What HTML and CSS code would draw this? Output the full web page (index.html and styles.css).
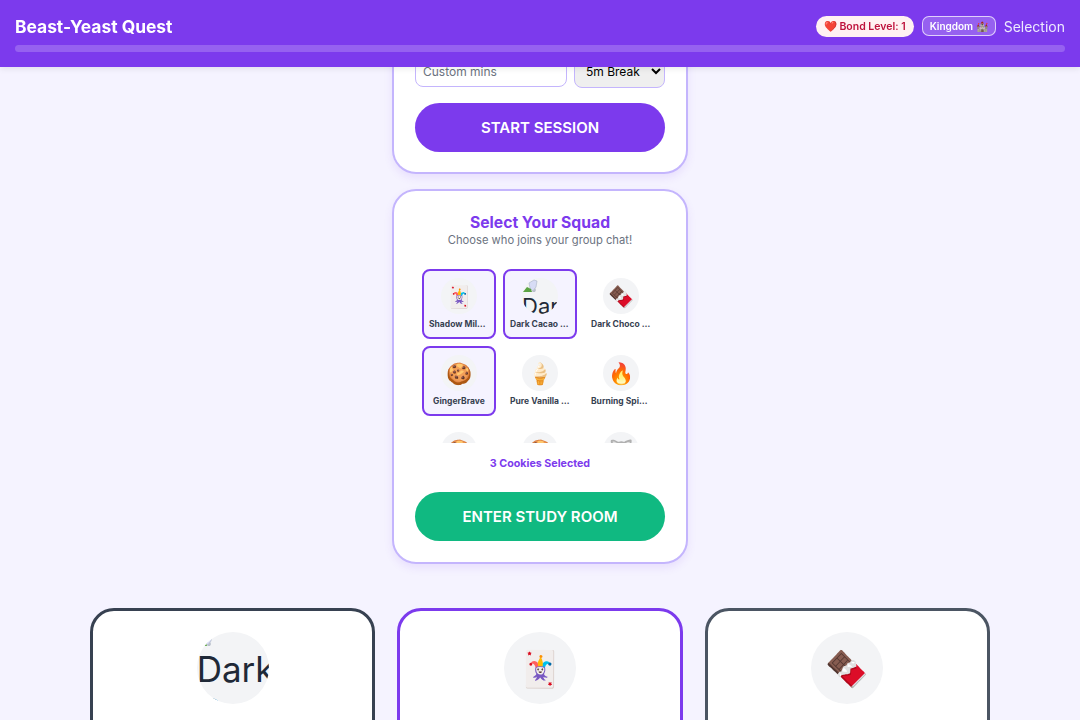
FILE: index.html
```html
<!DOCTYPE html>
<html lang="en">
  <head>
    <meta charset="UTF-8" />
    <meta name="viewport" content="width=device-width, initial-scale=1.0" />
    <title>Beast-Yeast Quest</title>
    <link rel="stylesheet" href="styles.css">
  </head>
  <body>
    <header class="topbar">
      <div class="topbar-row">
        <h1 class="brand">Beast-Yeast Quest</h1>
        <div class="topbar-right">
          <span class="bond-badge">❤️ Bond Level: 1</span>
          <button class="kingdom-btn">Kingdom 🏰</button>
          <span class="stage-label">Selection</span>
        </div>
      </div>
      <div class="xp-track"></div>
    </header>

    <main class="page">
      <section class="panel panel-timer">
        <div class="timer-inputs">
          <input class="mins-input" type="text" placeholder="Custom mins" />
          <select class="break-select">
            <option>5m Break</option>
          </select>
        </div>
        <button class="pill-btn pill-purple">START SESSION</button>
      </section>

      <section class="panel panel-squad">
        <h2 class="panel-title">Select Your Squad</h2>
        <p class="panel-sub">Choose who joins your group chat!</p>

        <div class="squad-scroll">
          <div class="squad-grid">
            <div class="squad-item selected">
              <span class="avatar">🃏</span>
              <span class="squad-name">Shadow Milk Cookie</span>
            </div>
            <div class="squad-item selected">
              <span class="avatar avatar-broken">
                <svg class="broken-icon" viewBox="0 0 16 16">
                  <polygon points="7,5 12,2 15,3 14,9 11,13 8,10" fill="#d7dcf5" stroke="#a9b4c4" stroke-width="0.6" />
                  <polygon points="1,14 5,9 9,11 10,14" fill="#5ba343" />
                  <polygon points="10,14 13,10 14,12 13,14" fill="#b9c0cc" />
                </svg>
                Dark Cacao Cookie
              </span>
              <span class="squad-name">Dark Cacao Cookie</span>
            </div>
            <div class="squad-item">
              <span class="avatar">🍫</span>
              <span class="squad-name">Dark Choco Cookie</span>
            </div>
            <div class="squad-item selected">
              <span class="avatar">🍪</span>
              <span class="squad-name">GingerBrave</span>
            </div>
            <div class="squad-item">
              <span class="avatar">🍦</span>
              <span class="squad-name">Pure Vanilla Cookie</span>
            </div>
            <div class="squad-item">
              <span class="avatar">🔥</span>
              <span class="squad-name">Burning Spice Cookie</span>
            </div>
            <div class="squad-item">
              <span class="avatar">🍪</span>
            </div>
            <div class="squad-item">
              <span class="avatar">🍪</span>
            </div>
            <div class="squad-item">
              <span class="avatar">🐺</span>
            </div>
          </div>
        </div>

        <p class="squad-count">3 Cookies Selected</p>
        <button class="pill-btn pill-green">ENTER STUDY ROOM</button>
      </section>

      <section class="room-grid">
        <div class="room-card card-dark">
          <span class="avatar avatar-large avatar-broken">
            <svg class="broken-icon" viewBox="0 0 16 16">
              <polygon points="7,5 12,2 15,3 14,9 11,13 8,10" fill="#d7dcf5" stroke="#a9b4c4" stroke-width="0.6" />
              <polygon points="1,14 5,9 9,11 10,14" fill="#5ba343" />
              <polygon points="10,14 13,10 14,12 13,14" fill="#b9c0cc" />
            </svg>
            Dark Cacao Cookie
          </span>
        </div>
        <div class="room-card card-purple">
          <span class="avatar avatar-large">🃏</span>
        </div>
        <div class="room-card card-slate">
          <span class="avatar avatar-large">🍫</span>
        </div>
      </section>
    </main>
  </body>
</html>
```

FILE: styles.css
```css
/* Basic Reset */
* {
  box-sizing: border-box;
  margin: 0;
  padding: 0;
}

html,
body {
  height: 720px;
  overflow: hidden;
}

body {
  font-family: "Inter", "Noto Sans", sans-serif;
  background-color: #f5f3ff;
  color: #1f2937;
}

/* Top bar */
.topbar {
  position: fixed;
  top: 0;
  left: 0;
  right: 0;
  z-index: 10;
  height: 67px;
  padding: 14px 15px 0;
  background-color: #7c3aed;
  box-shadow: 0 2px 6px rgba(0, 0, 0, 0.08);
}

.topbar-row {
  display: flex;
  justify-content: space-between;
  align-items: center;
  height: 24px;
}

.brand {
  font-size: 17.4px;
  font-weight: 700;
  color: #fff;
}

.topbar-right {
  display: flex;
  align-items: center;
  gap: 8px;
}

.bond-badge {
  padding: 4px 8px;
  border-radius: 999px;
  background-color: #fff1f2;
  color: #be123c;
  font-size: 10.5px;
  font-weight: 600;
}

.kingdom-btn {
  padding: 3px 7px;
  border: 1px solid rgba(255, 255, 255, 0.7);
  border-radius: 7px;
  background-color: rgba(255, 255, 255, 0.2);
  color: #fff;
  font-family: inherit;
  font-size: 10px;
  font-weight: 600;
}

.stage-label {
  color: #ede9fe;
  font-size: 14px;
}

.xp-track {
  height: 7px;
  margin-top: 7px;
  border-radius: 4px;
  background-color: rgba(255, 255, 255, 0.2);
}

/* Panels */
.page {
  display: flex;
  flex-direction: column;
  align-items: center;
}

.panel {
  width: 296px;
  padding: 0 21px;
  border: 2px solid #c4b5fd;
  border-radius: 24px;
  background-color: #fff;
  box-shadow: 0 4px 8px rgba(124, 58, 237, 0.1);
}

.panel-timer {
  height: 174px;
  padding-top: 55px;
  border-top: 0;
  border-radius: 0 0 24px 24px;
}

.timer-inputs {
  display: flex;
  gap: 7px;
}

.mins-input {
  width: 152px;
  height: 32px;
  padding: 0 7px;
  border: 1px solid #c4b5fd;
  border-radius: 8px;
  font-family: inherit;
  font-size: 12px;
}

.mins-input::placeholder {
  color: #6b7280;
}

.break-select {
  width: 91px;
  height: 33px;
  padding-left: 7px;
  border: 1px solid #c4b5fd;
  border-radius: 8px;
  background-color: #efefef;
  color: #000;
  font-family: inherit;
  font-size: 12px;
}

.pill-btn {
  display: block;
  width: 100%;
  height: 49px;
  border: none;
  border-radius: 999px;
  color: #fff;
  font-family: inherit;
  font-size: 15px;
  font-weight: 600;
}

.pill-purple {
  margin-top: 15px;
  background-color: #7c3aed;
}

.pill-green {
  background-color: #10b981;
}

.panel-squad {
  height: 375px;
  margin-top: 15px;
  padding-top: 23px;
  text-align: center;
}

.panel-title {
  color: #7c3aed;
  font-size: 15.7px;
  font-weight: 700;
  line-height: 18px;
}

.panel-sub {
  color: #6b7280;
  font-size: 11.2px;
  line-height: 16px;
}

/* Squad picker */
.squad-scroll {
  height: 181px;
  margin-top: 14px;
  padding: 7px;
  overflow: hidden;
}

.squad-grid {
  display: grid;
  grid-template-columns: repeat(3, 74px);
  grid-auto-rows: 70px;
  gap: 7px;
}

.squad-item {
  display: flex;
  flex-direction: column;
  align-items: center;
  padding-top: 7px;
  border: 2px solid transparent;
  border-radius: 8px;
}

.squad-item.selected {
  border-color: #7c3aed;
  background-color: #f5f3ff;
}

.avatar {
  display: flex;
  justify-content: center;
  align-items: center;
  flex-shrink: 0;
  width: 36px;
  height: 36px;
  border-radius: 50%;
  background-color: #f3f4f6;
  font-size: 21px;
  overflow: hidden;
}

.avatar-large {
  width: 72px;
  height: 72px;
  font-size: 35px;
}

.avatar-broken {
  display: block;
  font-size: 22px;
  line-height: 24px;
  text-align: left;
  color: #1f2937;
}

.avatar-large.avatar-broken {
  font-size: 35px;
  line-height: 42px;
}

.broken-icon {
  display: block;
  width: 16px;
  height: 16px;
}

.squad-name {
  width: 100%;
  margin-top: 4px;
  padding: 0 5px;
  color: #374151;
  font-size: 8.5px;
  font-weight: 700;
  line-height: 12px;
  white-space: nowrap;
  overflow: hidden;
  text-overflow: ellipsis;
}

.squad-count {
  margin: 13px 0 21px;
  color: #7c3aed;
  font-size: 10.7px;
  font-weight: 700;
  line-height: 15px;
}

/* Study room cards */
.room-grid {
  display: grid;
  grid-template-columns: repeat(3, 1fr);
  gap: 22px;
  width: 900px;
  margin-top: 44px;
}

.room-card {
  display: flex;
  justify-content: center;
  height: 200px;
  padding-top: 21px;
  border: 3px solid;
  border-radius: 24px;
  background-color: #fff;
}

.card-dark {
  border-color: #374151;
}

.card-purple {
  border-color: #7c3aed;
}

.card-slate {
  border-color: #4b5563;
}
```
